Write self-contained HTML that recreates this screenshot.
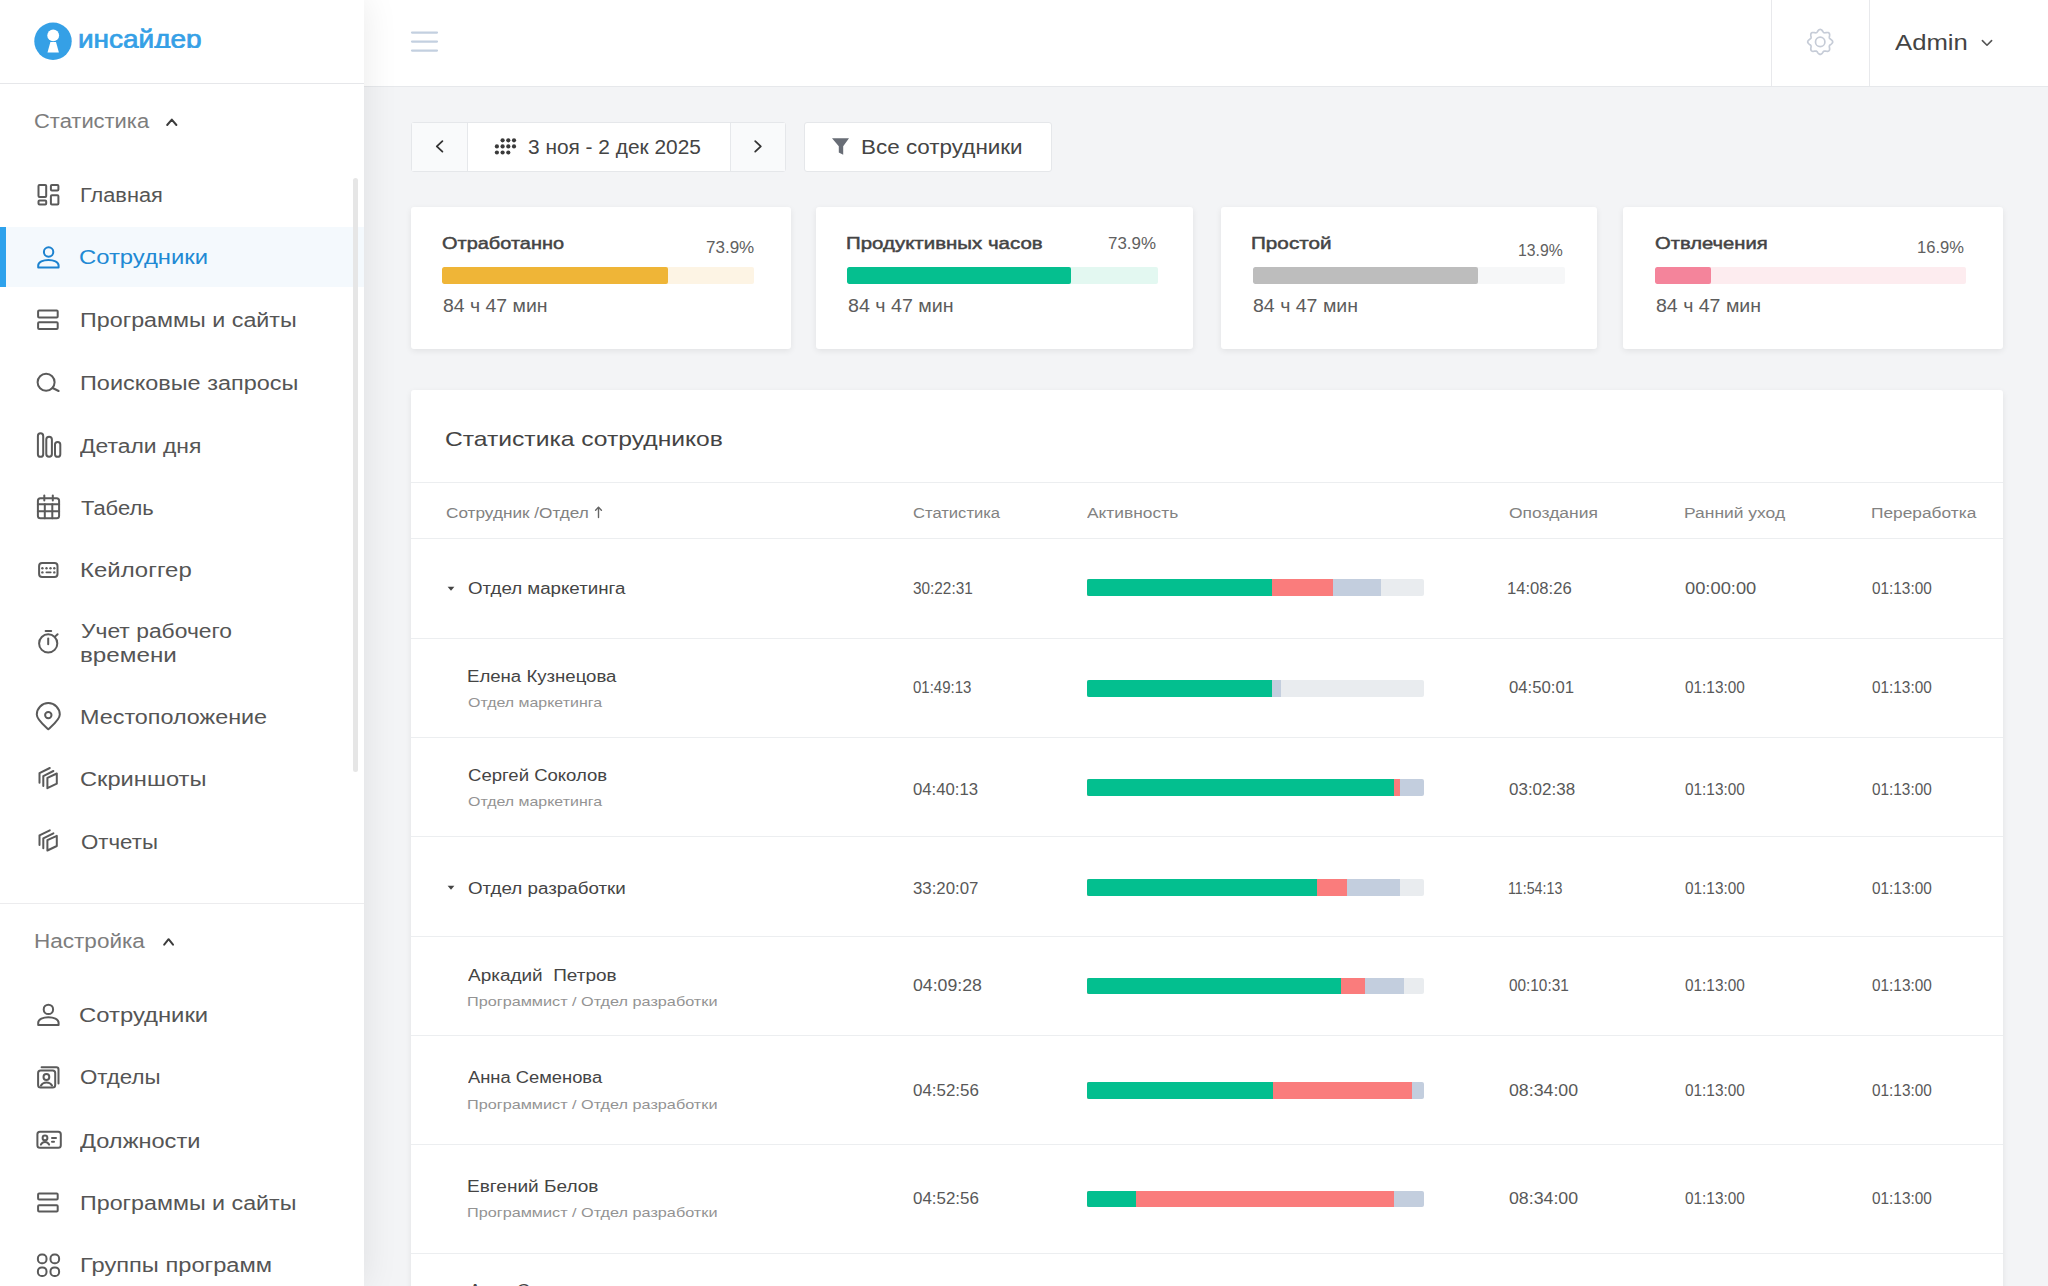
<!DOCTYPE html>
<html lang="ru">
<head>
<meta charset="utf-8">
<title>Инсайдер — Статистика сотрудников</title>
<style>
html,body{margin:0;padding:0;}
body{width:2048px;height:1286px;overflow:hidden;position:relative;background:#f3f4f6;font-family:"Liberation Sans",sans-serif;}
.t{position:absolute;white-space:nowrap;line-height:1;transform-origin:0 0;}
.hl{position:absolute;height:1px;background:#eceef0;}
.vl{position:absolute;width:1px;background:#e8e9ec;}
.bar{position:absolute;border-radius:2px;overflow:hidden;}
.ic{position:absolute;overflow:visible;}
.sidebar{position:absolute;left:0;top:0;width:364px;height:1286px;background:#fff;box-shadow:0 0 34px rgba(0,0,0,0.09);z-index:2;}
.header{position:absolute;left:364px;top:0;width:1684px;height:86px;background:#fff;border-bottom:1px solid #e6e8eb;z-index:1;}
.card{position:absolute;background:#fff;border-radius:3px;box-shadow:0 2px 6px rgba(0,0,0,0.075);}
.pbar{position:absolute;height:16.5px;border-radius:2px;overflow:hidden;}
.btn{position:absolute;top:122px;height:50px;box-sizing:border-box;border:1px solid #e5e7ea;}
</style>
</head>
<body>
<!-- SIDEBAR -->
<div class="sidebar">
  <div style="position:absolute;left:0;top:83px;width:364px;height:1px;background:#e6e7ea"></div>
  <div style="position:absolute;left:0;top:903px;width:364px;height:1px;background:#ececee"></div>
  <div style="position:absolute;left:0;top:226.5px;width:364px;height:60px;background:#f4f9fd"></div>
  <div style="position:absolute;left:0;top:226.5px;width:6px;height:60px;background:#2ea2ec"></div>
  <div style="position:absolute;left:352.7px;top:178px;width:5.6px;height:594px;border-radius:3px;background:#e6e6e6"></div>
  <svg class="ic" style="left:0;top:0" width="364" height="1286" viewBox="0 0 364 1286">
    <!-- logo -->
    <circle cx="53" cy="41.2" r="18.7" fill="#35a0e6"/>
    <circle cx="53.2" cy="35.4" r="5.9" fill="#fff"/>
    <path d="M50.4 41.9 H56 L58.9 52.5 H47.5 Z" fill="#fff"/>
    <g fill="none" stroke="#5a5a5a" stroke-width="2" stroke-linecap="round" stroke-linejoin="round">
      <!-- section chevrons -->
      <polyline points="167.2,125 171.8,119.6 176.4,125" stroke="#3c3c3c" stroke-width="2"/>
      <polyline points="164.2,944.6 168.6,939.2 173,944.6" stroke="#3c3c3c" stroke-width="2"/>
      <!-- Главная -->
      <rect x="38.5" y="185.1" width="7.7" height="11.8" rx="1"/>
      <rect x="50.9" y="185.1" width="7.5" height="5.5" rx="1"/>
      <rect x="38.5" y="200.4" width="7.7" height="4.1" rx="1"/>
      <rect x="50.9" y="195.3" width="7.5" height="9.2" rx="1"/>
      <!-- Сотрудники active -->
      <g stroke="#1c82cf">
        <circle cx="48.6" cy="252" r="4.7"/>
        <path d="M38.2 267.6 V265.4 C38.2 261.8 43.2 259.9 48.4 259.9 C53.6 259.9 58.6 261.8 58.6 265.4 V267.6 Z"/>
      </g>
      <!-- Программы и сайты -->
      <rect x="38.1" y="310.6" width="19.6" height="6.8" rx="1"/>
      <rect x="38.1" y="322.3" width="19.6" height="6.8" rx="1"/>
      <!-- Поиск -->
      <circle cx="46.1" cy="382.2" r="8.5"/>
      <line x1="52.6" y1="388" x2="58.6" y2="391"/>
      <!-- Детали дня -->
      <rect x="37.9" y="433.3" width="5.3" height="23.5" rx="2.65"/>
      <rect x="46.3" y="436.8" width="5.6" height="20" rx="2.8"/>
      <rect x="55" y="441.9" width="5.3" height="14.9" rx="2.65"/>
      <!-- Табель -->
      <rect x="37.9" y="498.3" width="21.2" height="20" rx="2.5"/>
      <line x1="44.3" y1="495.6" x2="44.3" y2="500.6"/>
      <line x1="52.8" y1="495.6" x2="52.8" y2="500.6"/>
      <line x1="37.9" y1="504.3" x2="59.1" y2="504.3"/>
      <line x1="37.9" y1="511.2" x2="59.1" y2="511.2"/>
      <line x1="44.8" y1="504.3" x2="44.8" y2="518.3"/>
      <line x1="52.3" y1="504.3" x2="52.3" y2="518.3"/>
      <!-- Кейлоггер -->
      <rect x="39.1" y="563" width="18.4" height="14.1" rx="3"/>
      <line x1="46.3" y1="572.4" x2="50.8" y2="572.4" stroke-width="1.6"/>
      <g fill="#5c5c5c" stroke="none">
        <circle cx="42.4" cy="568.2" r="1.2"/><circle cx="46.5" cy="568.2" r="1.2"/><circle cx="50.5" cy="568.2" r="1.2"/><circle cx="54.3" cy="568.2" r="1.2"/>
        <circle cx="42.4" cy="572.4" r="1.2"/><circle cx="54.3" cy="572.4" r="1.2"/>
      </g>
      <!-- Учет -->
      <circle cx="48.2" cy="643.4" r="9.1"/>
      <line x1="45.6" y1="630.9" x2="51.2" y2="630.9" stroke-width="2"/>
      <line x1="48.2" y1="638.4" x2="48.2" y2="644.2" stroke-width="2"/>
      <line x1="55.3" y1="636.4" x2="57.6" y2="634.2" stroke-width="2"/>
      <!-- Местоположение -->
      <path d="M48.3 729.3 C44.5 725.6 36.8 720 36.8 714.6 A11.5 11.5 0 1 1 59.8 714.6 C59.8 720 52.1 725.6 48.3 729.3 Z"/>
      <circle cx="48.3" cy="715.1" r="3.2"/>
      <!-- Скриншоты -->
      <path d="M47.4 777.9 L56.8 773.5 L56.8 783.7 L47.4 788.2 Z"/>
      <polyline points="43.3,786 43.3,776.1 53.4,771"/>
      <polyline points="39.5,782.8 39.5,773.1 49.8,768"/>
      <!-- Отчеты -->
      <path d="M47.4 840.2 L56.8 835.8 L56.8 846 L47.4 850.5 Z"/>
      <polyline points="43.3,848.3 43.3,838.4 53.4,833.3"/>
      <polyline points="39.5,845.1 39.5,835.4 49.8,830.3"/>
      <!-- Сотрудники (settings) -->
      <circle cx="48.4" cy="1009.4" r="4.7"/>
      <path d="M38.2 1024.9 V1022.7 C38.2 1019.1 43.2 1017.2 48.4 1017.2 C53.6 1017.2 58.6 1019.1 58.6 1022.7 V1024.9 Z"/>
      <!-- Отделы -->
      <rect x="38.1" y="1070.6" width="17.1" height="17" rx="2.5"/>
      <path d="M41.6 1067.3 H56.4 Q58.5 1067.3 58.5 1069.4 V1083.4"/>
      <circle cx="46.4" cy="1077" r="2.9"/>
      <path d="M41 1085.6 C42.2 1083.5 44.1 1082.6 46.5 1082.6 C48.9 1082.6 50.8 1083.5 52 1085.6"/>
      <!-- Должности -->
      <rect x="37.4" y="1131.7" width="23.4" height="16.1" rx="2.5"/>
      <circle cx="45" cy="1137.9" r="2.4"/>
      <path d="M40.9 1144.6 C41.9 1142.8 43.3 1142 45 1142 C46.7 1142 48.1 1142.8 49.1 1144.6"/>
      <line x1="52" y1="1137.9" x2="56" y2="1137.9"/>
      <line x1="52" y1="1141.8" x2="54" y2="1141.8"/>
      <!-- Программы и сайты -->
      <rect x="38.1" y="1193.5" width="19.6" height="6" rx="1"/>
      <rect x="38.1" y="1205.2" width="19.6" height="6.4" rx="1"/>
      <!-- Группы программ -->
      <rect x="37.9" y="1254.6" width="8.6" height="8.6" rx="3.8"/>
      <rect x="50.5" y="1254.6" width="8.6" height="8.6" rx="3.8"/>
      <rect x="37.9" y="1267.4" width="8.6" height="8.6" rx="3.8"/>
      <rect x="50.5" y="1267.4" width="8.6" height="8.6" rx="3.8"/>
    </g>
  </svg>
</div>

<!-- HEADER -->
<div class="header"></div>
<div class="vl" style="left:1771px;top:0;height:86px;z-index:3"></div>
<div class="vl" style="left:1869px;top:0;height:86px;z-index:3"></div>
<svg class="ic" style="left:0;top:0;z-index:3" width="2048" height="90" viewBox="0 0 2048 90">
  <g stroke="#c3d0e0" stroke-width="2.2" stroke-linecap="round">
    <line x1="412" y1="32.6" x2="437" y2="32.6"/>
    <line x1="412" y1="41.6" x2="437" y2="41.6"/>
    <line x1="412" y1="50.6" x2="437" y2="50.6"/>
  </g>
  <g fill="none" stroke="#c6ccd7" stroke-width="1.7">
    <path d="M1832.70 41.90 L1832.63 42.39 L1832.42 42.86 L1832.10 43.31 L1831.69 43.72 L1831.23 44.09 L1830.76 44.44 L1830.32 44.75 L1829.94 45.06 L1829.64 45.38 L1829.44 45.73 L1829.34 46.11 L1829.32 46.55 L1829.37 47.04 L1829.46 47.58 L1829.55 48.15 L1829.61 48.74 L1829.61 49.32 L1829.52 49.86 L1829.33 50.34 L1829.04 50.74 L1828.64 51.03 L1828.16 51.22 L1827.62 51.31 L1827.04 51.31 L1826.45 51.25 L1825.88 51.16 L1825.34 51.07 L1824.85 51.02 L1824.41 51.04 L1824.03 51.14 L1823.68 51.34 L1823.36 51.64 L1823.05 52.02 L1822.74 52.46 L1822.39 52.93 L1822.02 53.39 L1821.61 53.80 L1821.16 54.12 L1820.69 54.33 L1820.20 54.40 L1819.71 54.33 L1819.24 54.12 L1818.79 53.80 L1818.38 53.39 L1818.01 52.93 L1817.66 52.46 L1817.35 52.02 L1817.04 51.64 L1816.72 51.34 L1816.37 51.14 L1815.99 51.04 L1815.55 51.02 L1815.06 51.07 L1814.52 51.16 L1813.95 51.25 L1813.36 51.31 L1812.78 51.31 L1812.24 51.22 L1811.76 51.03 L1811.36 50.74 L1811.07 50.34 L1810.88 49.86 L1810.79 49.32 L1810.79 48.74 L1810.85 48.15 L1810.94 47.58 L1811.03 47.04 L1811.08 46.55 L1811.06 46.11 L1810.96 45.73 L1810.76 45.38 L1810.46 45.06 L1810.08 44.75 L1809.64 44.44 L1809.17 44.09 L1808.71 43.72 L1808.30 43.31 L1807.98 42.86 L1807.77 42.39 L1807.70 41.90 L1807.77 41.41 L1807.98 40.94 L1808.30 40.49 L1808.71 40.08 L1809.17 39.71 L1809.64 39.36 L1810.08 39.05 L1810.46 38.74 L1810.76 38.42 L1810.96 38.07 L1811.06 37.69 L1811.08 37.25 L1811.03 36.76 L1810.94 36.22 L1810.85 35.65 L1810.79 35.06 L1810.79 34.48 L1810.88 33.94 L1811.07 33.46 L1811.36 33.06 L1811.76 32.77 L1812.24 32.58 L1812.78 32.49 L1813.36 32.49 L1813.95 32.55 L1814.52 32.64 L1815.06 32.73 L1815.55 32.78 L1815.99 32.76 L1816.37 32.66 L1816.72 32.46 L1817.04 32.16 L1817.35 31.78 L1817.66 31.34 L1818.01 30.87 L1818.38 30.41 L1818.79 30.00 L1819.24 29.68 L1819.71 29.47 L1820.20 29.40 L1820.69 29.47 L1821.16 29.68 L1821.61 30.00 L1822.02 30.41 L1822.39 30.87 L1822.74 31.34 L1823.05 31.78 L1823.36 32.16 L1823.68 32.46 L1824.03 32.66 L1824.41 32.76 L1824.85 32.78 L1825.34 32.73 L1825.88 32.64 L1826.45 32.55 L1827.04 32.49 L1827.62 32.49 L1828.16 32.58 L1828.64 32.77 L1829.04 33.06 L1829.33 33.46 L1829.52 33.94 L1829.61 34.48 L1829.61 35.06 L1829.55 35.65 L1829.46 36.22 L1829.37 36.76 L1829.32 37.25 L1829.34 37.69 L1829.44 38.07 L1829.64 38.42 L1829.94 38.74 L1830.32 39.05 L1830.76 39.36 L1831.23 39.71 L1831.69 40.08 L1832.10 40.49 L1832.42 40.94 L1832.63 41.41 L1832.70 41.90 Z"/>
    <circle cx="1820.2" cy="41.9" r="4.7"/>
  </g>
  <polyline points="1982.4,40.6 1987,45.2 1991.6,40.6" fill="none" stroke="#555" stroke-width="1.6" stroke-linecap="round" stroke-linejoin="round"/>
</svg>

<!-- TOOLBAR -->
<div class="btn" style="left:411px;width:375px;background:#fff;border-radius:3px"></div>
<div style="position:absolute;left:412px;top:123px;width:55px;height:48px;background:#f9fafb"></div>
<div style="position:absolute;left:731px;top:123px;width:54px;height:48px;background:#f9fafb"></div>
<div class="vl" style="left:467px;top:123px;height:48px;background:#e6e8eb"></div>
<div class="vl" style="left:730px;top:123px;height:48px;background:#e6e8eb"></div>
<div class="btn" style="left:804px;width:248px;background:#fff;border-radius:3px"></div>
<svg class="ic" style="left:0;top:0" width="1100" height="200" viewBox="0 0 1100 200">
  <polyline points="442.4,141.2 436.8,146.4 442.4,151.6" fill="none" stroke="#333" stroke-width="1.8" stroke-linecap="round" stroke-linejoin="round"/>
  <polyline points="755.2,141.2 760.8,146.4 755.2,151.6" fill="none" stroke="#333" stroke-width="1.8" stroke-linecap="round" stroke-linejoin="round"/>
  <g fill="#3a3a3a">
    <circle cx="502.6" cy="140.3" r="2.1"/><circle cx="508.3" cy="140.3" r="2.1"/><circle cx="514" cy="140.3" r="2.1"/>
    <circle cx="496.9" cy="146.4" r="2.1"/><circle cx="502.6" cy="146.4" r="2.1"/><circle cx="508.3" cy="146.4" r="2.1"/><circle cx="514" cy="146.4" r="2.1"/>
    <circle cx="496.9" cy="152.5" r="2.1"/><circle cx="502.6" cy="152.5" r="2.1"/><circle cx="508.3" cy="152.5" r="2.1"/>
  </g>
  <path d="M832 138.2 H849 L843.2 146.2 V154.8 L838.8 152.6 V146.2 Z" fill="#686d76"/>
</svg>

<!-- STAT CARDS -->
<div class="card" style="left:411px;top:207px;width:380px;height:142px"></div>
<div class="card" style="left:816px;top:207px;width:377px;height:142px"></div>
<div class="card" style="left:1221px;top:207px;width:376px;height:142px"></div>
<div class="card" style="left:1623px;top:207px;width:380px;height:142px"></div>
<div class="pbar" style="left:442px;top:267.2px;width:312.3px;background:#fdf4e4"><div style="width:225.5px;height:100%;background:#efb537;border-radius:2px"></div></div>
<div class="pbar" style="left:847px;top:267.2px;width:311px;background:#e3f8f1"><div style="width:224.4px;height:100%;background:#05bf8f;border-radius:2px"></div></div>
<div class="pbar" style="left:1253px;top:267.2px;width:312px;background:#f6f7f8"><div style="width:225px;height:100%;background:#bdbdbd;border-radius:2px"></div></div>
<div class="pbar" style="left:1655px;top:267.2px;width:311px;background:#fdecef"><div style="width:56px;height:100%;background:#f4849b;border-radius:2px"></div></div>

<!-- TABLE CARD -->
<div class="card" style="left:411px;top:390px;width:1592px;height:920px"></div>
<div class="hl" style="left:411px;width:1592px;top:482px"></div>
<div class="hl" style="left:411px;width:1592px;top:538px"></div>
<svg class="ic" style="left:0;top:0" width="700" height="600" viewBox="0 0 700 600">
  <g fill="none" stroke="#666" stroke-width="1.4" stroke-linecap="round" stroke-linejoin="round">
    <line x1="598.5" y1="507.5" x2="598.5" y2="517.5"/>
    <polyline points="595.6,510.2 598.5,507.3 601.4,510.2"/>
  </g>
</svg>

<!-- ROWS -->
<div class="hl" style="left:411px;width:1592px;top:638.3px"></div>
<div class="bar" style="left:1086.5px;top:579.0px;width:337.7px;height:17.0px"><div style="position:absolute;left:0;width:337.7px;top:0;height:100%;background:#e9ecef"></div><div style="position:absolute;left:0;width:294.3px;top:0;height:100%;background:#c3cede"></div><div style="position:absolute;left:0;width:246.1px;top:0;height:100%;background:#fa7c7c"></div><div style="position:absolute;left:0;width:185.8px;top:0;height:100%;background:#03bf8f"></div></div>
<svg class="ic" style="left:445px;top:583.5px" width="12" height="10" viewBox="0 0 12 10"><path d="M2.6 2.8 L9.4 2.8 L6 6.8 Z" fill="#444"/></svg>
<div class="hl" style="left:411px;width:1592px;top:737.1px"></div>
<div class="bar" style="left:1086.5px;top:680.0px;width:337.7px;height:16.8px"><div style="position:absolute;left:0;width:337.7px;top:0;height:100%;background:#e9ecef"></div><div style="position:absolute;left:0;width:194.5px;top:0;height:100%;background:#c3cede"></div><div style="position:absolute;left:0;width:185.8px;top:0;height:100%;background:#03bf8f"></div></div>
<div class="hl" style="left:411px;width:1592px;top:836.0px"></div>
<div class="bar" style="left:1086.5px;top:778.9px;width:337.7px;height:16.9px"><div style="position:absolute;left:0;width:337.7px;top:0;height:100%;background:#c3cede"></div><div style="position:absolute;left:0;width:313.0px;top:0;height:100%;background:#fa7c7c"></div><div style="position:absolute;left:0;width:307.6px;top:0;height:100%;background:#03bf8f"></div></div>
<div class="hl" style="left:411px;width:1592px;top:936.0px"></div>
<div class="bar" style="left:1086.5px;top:879.0px;width:337.7px;height:17.0px"><div style="position:absolute;left:0;width:337.7px;top:0;height:100%;background:#e9ecef"></div><div style="position:absolute;left:0;width:313.0px;top:0;height:100%;background:#c3cede"></div><div style="position:absolute;left:0;width:260.7px;top:0;height:100%;background:#fa7c7c"></div><div style="position:absolute;left:0;width:230.2px;top:0;height:100%;background:#03bf8f"></div></div>
<svg class="ic" style="left:445px;top:882.7px" width="12" height="10" viewBox="0 0 12 10"><path d="M2.6 2.8 L9.4 2.8 L6 6.8 Z" fill="#444"/></svg>
<div class="hl" style="left:411px;width:1592px;top:1035.2px"></div>
<div class="bar" style="left:1086.5px;top:978.0px;width:337.7px;height:16.4px"><div style="position:absolute;left:0;width:337.7px;top:0;height:100%;background:#e9ecef"></div><div style="position:absolute;left:0;width:317.1px;top:0;height:100%;background:#c3cede"></div><div style="position:absolute;left:0;width:278.5px;top:0;height:100%;background:#fa7c7c"></div><div style="position:absolute;left:0;width:254.5px;top:0;height:100%;background:#03bf8f"></div></div>
<div class="hl" style="left:411px;width:1592px;top:1144.1px"></div>
<div class="bar" style="left:1086.5px;top:1082.0px;width:337.7px;height:17.0px"><div style="position:absolute;left:0;width:337.7px;top:0;height:100%;background:#c3cede"></div><div style="position:absolute;left:0;width:325.5px;top:0;height:100%;background:#fa7c7c"></div><div style="position:absolute;left:0;width:186.0px;top:0;height:100%;background:#03bf8f"></div></div>
<div class="hl" style="left:411px;width:1592px;top:1252.7px"></div>
<div class="bar" style="left:1086.5px;top:1191.0px;width:337.7px;height:16.2px"><div style="position:absolute;left:0;width:337.7px;top:0;height:100%;background:#c3cede"></div><div style="position:absolute;left:0;width:307.4px;top:0;height:100%;background:#fa7c7c"></div><div style="position:absolute;left:0;width:49.9px;top:0;height:100%;background:#03bf8f"></div></div>
<!-- TEXT -->
<div style="position:absolute;left:0;top:0;z-index:5">
<div style="position:absolute;left:0;top:0;width:364px;height:48px;overflow:hidden"><div class="t" style="left:77.52px;top:25.59px;font-size:26px;color:#35a0e6;-webkit-text-stroke:0.73px #35a0e6;transform:scaleX(1.0758);">инсайдер</div></div>
<div class="t" style="left:33.90px;top:111.07px;font-size:20px;color:#7d7d7d;transform:scaleX(1.0961);">Статистика</div>
<div class="t" style="left:80.11px;top:184.77px;font-size:20px;color:#555555;transform:scaleX(1.0876);">Главная</div>
<div class="t" style="left:79.11px;top:247.07px;font-size:20px;color:#2189d4;transform:scaleX(1.1916);">Сотрудники</div>
<div class="t" style="left:79.64px;top:310.47px;font-size:20px;color:#555555;transform:scaleX(1.1645);">Программы и сайты</div>
<div class="t" style="left:79.63px;top:373.27px;font-size:20px;color:#555555;transform:scaleX(1.1724);">Поисковые запросы</div>
<div class="t" style="left:80.20px;top:436.07px;font-size:20px;color:#555555;transform:scaleX(1.1448);">Детали дня</div>
<div class="t" style="left:80.80px;top:498.27px;font-size:20px;color:#555555;transform:scaleX(1.0973);">Табель</div>
<div class="t" style="left:79.60px;top:559.77px;font-size:20px;color:#555555;transform:scaleX(1.1969);">Кейлоггер</div>
<div class="t" style="left:80.80px;top:621.37px;font-size:20px;color:#555555;transform:scaleX(1.1425);">Учет рабочего</div>
<div class="t" style="left:79.59px;top:644.67px;font-size:20px;color:#555555;transform:scaleX(1.2110);">времени</div>
<div class="t" style="left:79.73px;top:706.57px;font-size:20px;color:#555555;transform:scaleX(1.1679);">Местоположение</div>
<div class="t" style="left:79.72px;top:768.77px;font-size:20px;color:#555555;transform:scaleX(1.1837);">Скриншоты</div>
<div class="t" style="left:80.90px;top:831.57px;font-size:20px;color:#555555;transform:scaleX(1.1128);">Отчеты</div>
<div class="t" style="left:34.47px;top:930.57px;font-size:20px;color:#7d7d7d;transform:scaleX(1.1258);">Настройка</div>
<div class="t" style="left:79.21px;top:1005.47px;font-size:20px;color:#555555;transform:scaleX(1.1926);">Сотрудники</div>
<div class="t" style="left:80.40px;top:1067.27px;font-size:20px;color:#555555;transform:scaleX(1.1150);">Отделы</div>
<div class="t" style="left:80.40px;top:1130.77px;font-size:20px;color:#555555;transform:scaleX(1.1802);">Должности</div>
<div class="t" style="left:79.64px;top:1192.67px;font-size:20px;color:#555555;transform:scaleX(1.1628);">Программы и сайты</div>
<div class="t" style="left:79.62px;top:1255.27px;font-size:20px;color:#555555;transform:scaleX(1.1833);">Группы программ</div>
<div class="t" style="left:1895.40px;top:31.55px;font-size:22.5px;color:#444444;transform:scaleX(1.1413);">Admin</div>
<div class="t" style="left:528.00px;top:136.77px;font-size:20px;color:#444444;transform:scaleX(1.0429);">3 ноя - 2 дек 2025</div>
<div class="t" style="left:861.48px;top:137.07px;font-size:20px;color:#444444;transform:scaleX(1.1215);">Все сотрудники</div>
<div class="t" style="left:441.70px;top:235.36px;font-size:17px;color:#444444;-webkit-text-stroke:0.48px #444444;transform:scaleX(1.1732);">Отработанно</div>
<div class="t" style="left:705.60px;top:238.51px;font-size:17px;color:#606060;transform:scaleX(1.0003);">73.9%</div>
<div class="t" style="left:442.70px;top:298.19px;font-size:17.5px;color:#5c5c5c;transform:scaleX(1.1109);">84 ч 47 мин</div>
<div class="t" style="left:846.00px;top:235.11px;font-size:17px;color:#444444;-webkit-text-stroke:0.48px #444444;transform:scaleX(1.2032);">Продуктивных часов</div>
<div class="t" style="left:1108.20px;top:235.21px;font-size:17px;color:#606060;transform:scaleX(0.9940);">73.9%</div>
<div class="t" style="left:847.60px;top:298.19px;font-size:17.5px;color:#5c5c5c;transform:scaleX(1.1226);">84 ч 47 мин</div>
<div class="t" style="left:1250.78px;top:235.11px;font-size:17px;color:#444444;-webkit-text-stroke:0.48px #444444;transform:scaleX(1.2168);">Простой</div>
<div class="t" style="left:1518.07px;top:241.61px;font-size:17px;color:#606060;transform:scaleX(0.9281);">13.9%</div>
<div class="t" style="left:1253.00px;top:298.19px;font-size:17.5px;color:#5c5c5c;transform:scaleX(1.1162);">84 ч 47 мин</div>
<div class="t" style="left:1654.80px;top:235.11px;font-size:17px;color:#444444;-webkit-text-stroke:0.48px #444444;transform:scaleX(1.1885);">Отвлечения</div>
<div class="t" style="left:1916.93px;top:238.61px;font-size:17px;color:#606060;transform:scaleX(0.9727);">16.9%</div>
<div class="t" style="left:1656.00px;top:298.19px;font-size:17.5px;color:#5c5c5c;transform:scaleX(1.1162);">84 ч 47 мин</div>
<div class="t" style="left:445.33px;top:427.52px;font-size:21px;color:#444444;transform:scaleX(1.1735);">Статистика сотрудников</div>
<div class="t" style="left:445.80px;top:504.68px;font-size:15.5px;color:#828282;transform:scaleX(1.1096);">Сотрудник /Отдел</div>
<div class="t" style="left:912.50px;top:504.98px;font-size:15.5px;color:#828282;transform:scaleX(1.0699);">Статистика</div>
<div class="t" style="left:1086.50px;top:504.98px;font-size:15.5px;color:#828282;transform:scaleX(1.1203);">Активность</div>
<div class="t" style="left:1508.60px;top:504.98px;font-size:15.5px;color:#828282;transform:scaleX(1.1255);">Опоздания</div>
<div class="t" style="left:1683.57px;top:504.98px;font-size:15.5px;color:#828282;transform:scaleX(1.1251);">Ранний уход</div>
<div class="t" style="left:1870.78px;top:504.98px;font-size:15.5px;color:#828282;transform:scaleX(1.1173);">Переработка</div>
<div class="t" style="left:468.60px;top:1283.46px;font-size:16px;color:#444444;transform:scaleX(1.1444);">Анна Семенова</div>
<div class="t" style="left:468.40px;top:581.46px;font-size:16px;color:#444444;transform:scaleX(1.1689);">Отдел маркетинга</div>
<div class="t" style="left:912.50px;top:580.66px;font-size:16px;color:#585858;transform:scaleX(0.9586);">30:22:31</div>
<div class="t" style="left:1507.46px;top:580.66px;font-size:16px;color:#585858;transform:scaleX(1.0394);">14:08:26</div>
<div class="t" style="left:1684.60px;top:580.66px;font-size:16px;color:#585858;transform:scaleX(1.1445);">00:00:00</div>
<div class="t" style="left:1871.90px;top:580.66px;font-size:16px;color:#585858;transform:scaleX(0.9586);">01:13:00</div>
<div class="t" style="left:467.24px;top:669.16px;font-size:16px;color:#444444;transform:scaleX(1.1623);">Елена Кузнецова</div>
<div class="t" style="left:468.40px;top:695.57px;font-size:13.5px;color:#939393;transform:scaleX(1.1805);">Отдел маркетинга</div>
<div class="t" style="left:912.50px;top:680.26px;font-size:16px;color:#585858;transform:scaleX(0.9378);">01:49:13</div>
<div class="t" style="left:1508.50px;top:680.26px;font-size:16px;color:#585858;transform:scaleX(1.0452);">04:50:01</div>
<div class="t" style="left:1684.60px;top:680.26px;font-size:16px;color:#585858;transform:scaleX(0.9602);">01:13:00</div>
<div class="t" style="left:1871.90px;top:680.26px;font-size:16px;color:#585858;transform:scaleX(0.9586);">01:13:00</div>
<div class="t" style="left:468.40px;top:768.16px;font-size:16px;color:#444444;transform:scaleX(1.1578);">Сергей Соколов</div>
<div class="t" style="left:468.40px;top:794.97px;font-size:13.5px;color:#939393;transform:scaleX(1.1805);">Отдел маркетинга</div>
<div class="t" style="left:912.50px;top:782.06px;font-size:16px;color:#585858;transform:scaleX(1.0452);">04:40:13</div>
<div class="t" style="left:1508.50px;top:782.06px;font-size:16px;color:#585858;transform:scaleX(1.0612);">03:02:38</div>
<div class="t" style="left:1684.60px;top:782.06px;font-size:16px;color:#585858;transform:scaleX(0.9602);">01:13:00</div>
<div class="t" style="left:1871.90px;top:782.06px;font-size:16px;color:#585858;transform:scaleX(0.9586);">01:13:00</div>
<div class="t" style="left:468.40px;top:880.66px;font-size:16px;color:#444444;transform:scaleX(1.1729);">Отдел разработки</div>
<div class="t" style="left:912.50px;top:880.86px;font-size:16px;color:#585858;transform:scaleX(1.0500);">33:20:07</div>
<div class="t" style="left:1507.61px;top:880.86px;font-size:16px;color:#585858;transform:scaleX(0.8888);">11:54:13</div>
<div class="t" style="left:1684.60px;top:880.86px;font-size:16px;color:#585858;transform:scaleX(0.9602);">01:13:00</div>
<div class="t" style="left:1871.90px;top:880.86px;font-size:16px;color:#585858;transform:scaleX(0.9602);">01:13:00</div>
<div class="t" style="left:468.40px;top:967.96px;font-size:16px;color:#444444;transform:scaleX(1.1848);">Аркадий&nbsp;&nbsp;Петров</div>
<div class="t" style="left:467.20px;top:994.57px;font-size:13.5px;color:#939393;transform:scaleX(1.2018);">Программист / Отдел разработки</div>
<div class="t" style="left:912.50px;top:978.06px;font-size:16px;color:#585858;transform:scaleX(1.1061);">04:09:28</div>
<div class="t" style="left:1508.50px;top:978.06px;font-size:16px;color:#585858;transform:scaleX(0.9586);">00:10:31</div>
<div class="t" style="left:1684.60px;top:978.06px;font-size:16px;color:#585858;transform:scaleX(0.9602);">01:13:00</div>
<div class="t" style="left:1871.90px;top:978.06px;font-size:16px;color:#585858;transform:scaleX(0.9602);">01:13:00</div>
<div class="t" style="left:468.40px;top:1070.46px;font-size:16px;color:#444444;transform:scaleX(1.1461);">Анна Семенова</div>
<div class="t" style="left:467.20px;top:1097.57px;font-size:13.5px;color:#939393;transform:scaleX(1.2018);">Программист / Отдел разработки</div>
<div class="t" style="left:912.50px;top:1082.66px;font-size:16px;color:#585858;transform:scaleX(1.0580);">04:52:56</div>
<div class="t" style="left:1508.50px;top:1082.66px;font-size:16px;color:#585858;transform:scaleX(1.1093);">08:34:00</div>
<div class="t" style="left:1684.60px;top:1082.66px;font-size:16px;color:#585858;transform:scaleX(0.9602);">01:13:00</div>
<div class="t" style="left:1871.90px;top:1082.66px;font-size:16px;color:#585858;transform:scaleX(0.9602);">01:13:00</div>
<div class="t" style="left:467.21px;top:1179.46px;font-size:16px;color:#444444;transform:scaleX(1.1891);">Евгений Белов</div>
<div class="t" style="left:467.20px;top:1206.37px;font-size:13.5px;color:#939393;transform:scaleX(1.2018);">Программист / Отдел разработки</div>
<div class="t" style="left:912.50px;top:1191.26px;font-size:16px;color:#585858;transform:scaleX(1.0580);">04:52:56</div>
<div class="t" style="left:1508.50px;top:1191.26px;font-size:16px;color:#585858;transform:scaleX(1.1093);">08:34:00</div>
<div class="t" style="left:1684.60px;top:1191.26px;font-size:16px;color:#585858;transform:scaleX(0.9602);">01:13:00</div>
<div class="t" style="left:1871.90px;top:1191.26px;font-size:16px;color:#585858;transform:scaleX(0.9602);">01:13:00</div>
</div>
</body>
</html>
